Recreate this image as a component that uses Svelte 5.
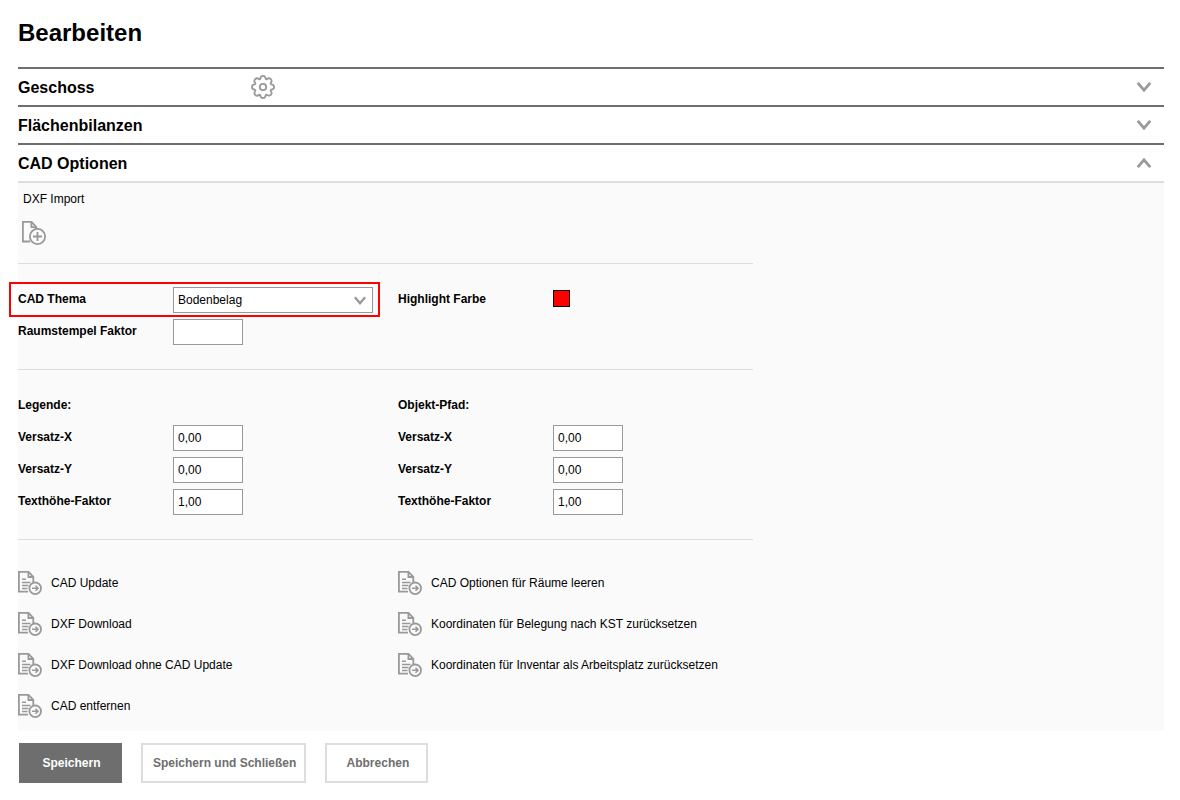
<script lang="ts">
  type SectionId = 'geschoss' | 'bilanzen' | 'cad';

  const sections: { id: SectionId; title: string; settings?: boolean }[] = [
    { id: 'geschoss', title: 'Geschoss', settings: true },
    { id: 'bilanzen', title: 'Flächenbilanzen' },
    { id: 'cad', title: 'CAD Optionen' }
  ];

  const actions = [
    ['CAD Update', 'DXF Download', 'DXF Download ohne CAD Update', 'CAD entfernen'],
    [
      'CAD Optionen für Räume leeren',
      'Koordinaten für Belegung nach KST zurücksetzen',
      'Koordinaten für Inventar als Arbeitsplatz zurücksetzen'
    ]
  ];

  let open = $state<SectionId | null>('cad');
  let theme = $state('Bodenbelag');
  let highlight = $state('#ff0000');
  let stampFactor = $state('');

  let offsets = $state([
    {
      id: 'legende',
      title: 'Legende:',
      fields: [
        { label: 'Versatz-X', value: '0,00' },
        { label: 'Versatz-Y', value: '0,00' },
        { label: 'Texthöhe-Faktor', value: '1,00' }
      ]
    },
    {
      id: 'pfad',
      title: 'Objekt-Pfad:',
      fields: [
        { label: 'Versatz-X', value: '0,00' },
        { label: 'Versatz-Y', value: '0,00' },
        { label: 'Texthöhe-Faktor', value: '1,00' }
      ]
    }
  ]);

  function toggle(id: SectionId) {
    open = open === id ? null : id;
  }
</script>

<main>
  <h1>Bearbeiten</h1>

  {#each sections as section}
    <section>
      <div class="section-head">
        <h2>{section.title}</h2>
        {#if section.settings}
          <button class="icon-btn" aria-label="Einstellungen">
            <svg width="24" height="24" viewBox="0 0 24 24" fill="none" stroke="#999" stroke-width="1.8" stroke-linejoin="round">
              <path d="M9.300 3.900C9.500 1.600 10.200 .9 12 .9s2.500.7 2.700 3l1 .4c1.700-1.400 2.900-1.500 4.100-.2s1.200 2.500-.2 4.200l.5 1c2.300.2 3 .9 3 2.700s-.7 2.500-3 2.700l-.5 1c1.400 1.700 1.500 2.900.2 4.100s-2.400 1.200-4.100-.1l-1 .4c-.2 2.300-.9 3-2.700 3s-2.500-.7-2.700-3l-1-.4c-1.700 1.400-2.900 1.400-4.100.1s-1.200-2.400.2-4.100l-.5-1c-2.300-.2-3-.9-3-2.700s.7-2.500 3-2.700l.5-1C3 6.600 2.900 5.400 4.200 4.100s2.400-1.200 4.100.2z" />
              <circle cx="12" cy="12" r="3.200" />
            </svg>
          </button>
        {/if}
        <button
          class="toggle"
          aria-label={section.title}
          aria-expanded={open === section.id}
          onclick={() => toggle(section.id)}
        >
          <svg class:up={open === section.id} width="16" height="12" viewBox="0 0 16 12" fill="none" stroke="#999" stroke-width="2.8">
            <path d="M1.700 1.800L8 9.200l6.300-7.400" />
          </svg>
        </button>
      </div>

      {#if section.id === 'cad' && open === 'cad'}
        <div class="panel">
          <div class="block import">
            <span>DXF Import</span>
            <button class="icon-btn" aria-label="DXF Import">
              <svg width="24" height="24" viewBox="0 0 24 24" fill="none" stroke="#999" stroke-width="1.8">
                <path d="M8 20.500H.9V.9h8.600L14.300 6v2" />
                <path d="M9.400 1v5.200h4.900" />
                <circle cx="15.500" cy="15.500" r="7.600" />
                <path d="M15.500 11v9M11 15.500h9" />
              </svg>
            </button>
          </div>

          <div class="block columns">
            <div>
              <div class="field marked">
                <label for="theme">CAD Thema</label>
                <div class="select">
                  <select id="theme" bind:value={theme}>
                    <option>Bodenbelag</option>
                  </select>
                  <svg width="12" height="9" viewBox="0 0 12 9" fill="none" stroke="#999" stroke-width="2.400">
                    <path d="M.8 1.200L6 7.200l5.200-6" />
                  </svg>
                </div>
              </div>
              <div class="field">
                <label for="stamp">Raumstempel Faktor</label>
                <input id="stamp" type="text" bind:value={stampFactor} />
              </div>
            </div>
            <div class="field">
              <label for="highlight">Highlight Farbe</label>
              <input id="highlight" type="color" bind:value={highlight} />
            </div>
          </div>

          <div class="block columns">
            {#each offsets as group}
              <div>
                <h3 class="field">{group.title}</h3>
                {#each group.fields as field, i}
                  <div class="field">
                    <label for="{group.id}-{i}">{field.label}</label>
                    <input id="{group.id}-{i}" type="text" bind:value={field.value} />
                  </div>
                {/each}
              </div>
            {/each}
          </div>

          <div class="columns actions">
            {#each actions as column}
              <ul>
                {#each column as action}
                  <li>
                    <button class="action">
                      <svg width="24" height="24" viewBox="0 0 24 24" fill="none" stroke="#999" stroke-width="1.800">
                        <path d="M10 20.600H.9V.9h9.600l4.800 5v5" />
                        <path d="M10.400 1v5h4.900" />
                        <path d="M4 8.200h4M4 11.500h8.500M4 14.500h6.500M4 17.500h5.500" stroke-width="1.400" />
                        <circle cx="17.200" cy="17.300" r="5.800" />
                        <path d="M14 17.300h5.500M17.500 14.800l2.500 2.500-2.500 2.500" stroke-width="1.600" />
                      </svg>
                      {action}
                    </button>
                  </li>
                {/each}
              </ul>
            {/each}
          </div>
        </div>
      {/if}
    </section>
  {/each}

  <footer>
    <button class="btn primary">Speichern</button>
    <button class="btn">Speichern und Schließen</button>
    <button class="btn">Abbrechen</button>
  </footer>
</main>

<style>
  :global(body) {
    margin: 0;
    background: #fff;
  }

  main {
    padding: 18px 16px 16px 18px;
    font-family: 'Liberation Sans', Arial, sans-serif;
    font-size: 12px;
    color: #000;
  }

  h1,
  h2,
  h3,
  ul {
    margin: 0;
    padding: 0;
  }

  h1 {
    margin-bottom: 19px;
    font-size: 24px;
    line-height: 30px;
  }

  button,
  input,
  select {
    box-sizing: border-box;
    font: inherit;
    color: inherit;
  }

  button {
    padding: 0;
    border: none;
    background: none;
    cursor: pointer;
  }

  svg {
    display: block;
    flex: none;
  }

  .section-head {
    display: flex;
    align-items: center;
    height: 36px;
    border-top: 2px solid #6e6e6e;
  }

  h2 {
    width: 233px;
    padding-top: 2px;
    font-size: 16px;
    line-height: 20px;
  }

  .toggle {
    margin-left: auto;
    padding: 12px;
  }

  .toggle .up {
    transform: rotate(180deg);
  }

  .panel {
    padding-bottom: 5px;
    border-top: 2px solid #ddd;
    background: #fafafa;
  }

  .block {
    max-width: 735px;
    padding: 20px 0 21px;
    border-bottom: 1px solid #ddd;
  }

  .import {
    display: flex;
    flex-direction: column;
    align-items: flex-start;
    gap: 14px;
    padding: 8px 0 18px;
  }

  .import span {
    padding-left: 5px;
    line-height: 16px;
  }

  .import .icon-btn {
    margin-left: 4px;
  }

  .columns {
    display: grid;
    grid-template-columns: 380px 1fr;
    align-items: start;
  }

  .field {
    position: relative;
    display: flex;
    align-items: center;
    height: 32px;
  }

  label,
  h3 {
    width: 155px;
    font-size: 12px;
    font-weight: bold;
  }

  label {
    padding-bottom: 2px;
  }

  h3.field {
    height: 30px;
    padding-bottom: 2px;
  }

  /* frame round the highlighted setting */
  .marked::after {
    content: '';
    position: absolute;
    inset: -2px 18px -1px -9px;
    border: 2px solid #f00;
    pointer-events: none;
  }

  input[type='text'],
  select {
    height: 26px;
    padding: 0 4px;
    border: 1px solid #999;
    border-radius: 0;
    background: #fff;
  }

  input[type='text'] {
    width: 70px;
  }

  .select {
    position: relative;
  }

  select {
    display: block;
    width: 200px;
    appearance: none;
  }

  .select svg {
    position: absolute;
    top: 9px;
    right: 7px;
    pointer-events: none;
  }

  input[type='color'] {
    width: 17px;
    height: 17px;
    margin: 0 0 3px;
    padding: 0;
    border: 1px solid #000;
    appearance: none;
  }

  input[type='color']::-webkit-color-swatch-wrapper {
    padding: 0;
  }

  input[type='color']::-webkit-color-swatch {
    border: none;
    border-radius: 0;
  }

  .actions {
    padding-top: 22px;
  }

  ul {
    list-style: none;
  }

  .action {
    display: flex;
    align-items: center;
    gap: 9px;
    height: 41px;
  }

  footer {
    display: flex;
    flex-wrap: wrap;
    gap: 19px;
    padding: 12px 1px 0;
  }

  .btn {
    min-width: 103px;
    height: 40px;
    padding: 0 8px 0 10px;
    border: 2px solid #ddd;
    background: #fff;
    color: #6e6e6e;
    font-weight: bold;
  }

  .primary {
    border-color: #6e6e6e;
    background: #6e6e6e;
    color: #fff;
  }
</style>
